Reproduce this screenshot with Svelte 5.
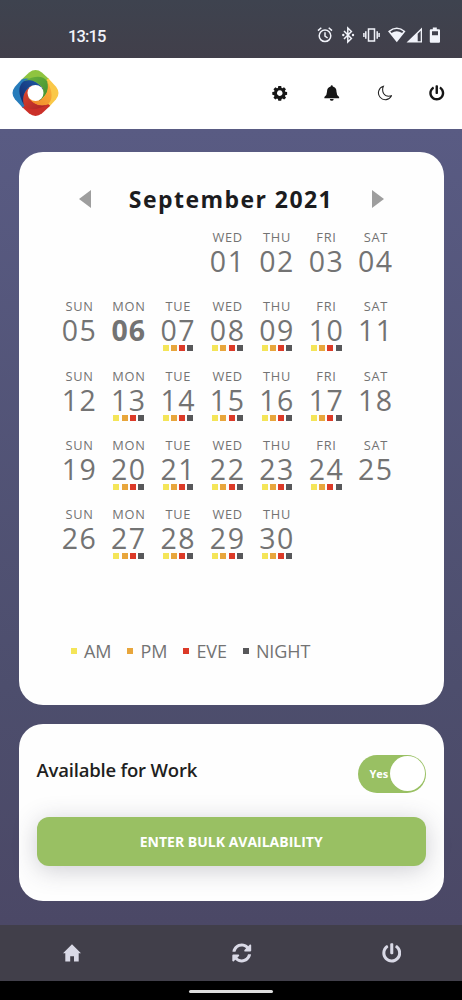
<script lang="ts">
  type Day = { date: number; name: string; shifts: boolean };

  const dayNames = ["SUN", "MON", "TUE", "WED", "THU", "FRI", "SAT"];
  const firstWeekday = 3;
  const today = 6;

  const shifts = [
    { id: "am", label: "AM" },
    { id: "pm", label: "PM" },
    { id: "eve", label: "EVE" },
    { id: "night", label: "NIGHT" },
  ];

  // blades of the logo, clockwise from the top
  const blades = [
    { id: "green", from: "#3f8f33", to: "#6db33c", outer: "#8fc43f" },
    { id: "yellow", from: "#f08329", to: "#f9b53b", outer: "#fac848" },
    { id: "red", from: "#e2482c", to: "#a82228", outer: "#cb3029" },
    { id: "blue", from: "#1d5ba6", to: "#14266b", outer: "#277cbb" },
  ];

  const days: Day[] = Array.from({ length: 30 }, (_, i) => {
    const weekday = (i + firstWeekday) % 7;
    return {
      date: i + 1,
      name: dayNames[weekday],
      shifts: i + 1 > today && weekday > 0 && weekday < 6,
    };
  });

  let available = $state(true);
</script>

{#snippet powerIcon()}
  <svg class="power" viewBox="0 0 512 512">
    <path
      d="M400 54.1c63 45 104 118.6 104 201.9 0 136.8-110.8 247.7-247.5 248C120 504.3 8.2 393 8 256.4 7.9 173.1 48.9 99.3 111.8 54.2c11.7-8.3 28-4.8 35 7.7L162.6 90c5.9 10.5 3.1 23.8-6.6 31-41.5 30.8-68 79.6-68 134.9-.1 92.3 74.5 168.1 168 168.1 91.6 0 168.6-74.2 168-169.1-.3-51.8-24.7-101.8-68.1-134-9.7-7.2-12.4-20.5-6.5-30.9l15.8-28.1c7-12.4 23.2-16.1 34.8-7.8zM296 264V24c0-13.3-10.7-24-24-24h-32c-13.3 0-24 10.7-24 24v240c0 13.3 10.7 24 24 24h32c13.3 0 24-10.7 24-24z"
    />
  </svg>
{/snippet}

<div class="screen">
  <div class="status">
    <span class="time">13:15</span>
    <svg class="status-icons" viewBox="0 0 126 18">
      <g fill="none" stroke="#f1f3fa" stroke-width="1.5">
        <circle cx="10" cy="9.8" r="5.8" />
        <path d="M10 6.2v4l2.6 1.8M3 4.6l3.3-2.8M17 4.6l-3.3-2.8" />
        <path d="M29 5l7.4 7.6-3.6 3.4V2l3.6 3.4L29 13" />
        <path d="M53.5 3h6v12h-6zM50.8 5.2v7.6M62.2 5.2v7.6M48.9 7v4M64.1 7v4" />
      </g>
      <g fill="#f1f3fa">
        <circle cx="28.3" cy="9" r="1.2" />
        <circle cx="38" cy="9" r="1.2" />
        <path
          fill-rule="evenodd"
          d="M73 5.2Q81.8-2 90.5 5.2L81.8 16.3zM75.2 5.4l1.3 1.7q5.3-3.8 10.6 0l1.3-1.7q-6.6-4.8-13.2 0z"
        />
        <path fill-rule="evenodd" d="M91.5 16.5L107 1.5v15zM102.7 7.8v7.4h3V4.8z" />
        <path
          fill-rule="evenodd"
          d="M117.8 1.5h4v1.7h2.2q1 0 1 1v11.5q0 1-1 1h-8.2q-1 0-1-1V4.2q0-1 1-1h2zM117 5.2v4h6v-4z"
        />
      </g>
    </svg>
  </div>

  <header class="header">
    <svg class="logo" viewBox="0 0 48 48">
      <defs>
        {#each blades as blade (blade.id)}
          <linearGradient id={blade.id} x1="1" y1="1" x2="0" y2="0">
            <stop offset="0" stop-color={blade.from} />
            <stop offset="1" stop-color={blade.to} />
          </linearGradient>
        {/each}
      </defs>
      {#each blades as blade, i (blade.id)}
        <path
          fill={blade.outer}
          transform="rotate({i * 90} 24 24)"
          d="M9 11L17.5 3Q24-2 30.5 3L37.5 9.5Q40 13 38 20L24 24z"
        />
      {/each}
      {#each blades as blade, i (blade.id)}
        <path
          fill="url(#{blade.id})"
          transform="rotate({i * 90} 24 24)"
          d="M12 12Q29 3 36 12Q40 23 28 32L24 24 32 20Q25 9 12 12z"
        />
      {/each}
      <circle cx="24" cy="24" r="8.2" fill="#fff" />
    </svg>
    <div class="header-icons">
      <svg viewBox="0 0 16 16">
        <path
          fill-rule="evenodd"
          d="M6.5.9h3l.4 1.9.9.4 1.6-1.2 2 2-1.1 1.6.4 1.1 1.9.3v2.8l-1.9.4-.4 1 1.2 1.7-2 1.9-1.6-1-1 .4-.4 1.9h-3l-.4-1.9-1-.4-1.6 1-2-1.9 1.1-1.7-.4-1-1.9-.4V7l1.9-.3.4-1.1L1.5 4l2-2 1.6 1.2 1-.4zM8 5.2a2.9 2.9 0 1 0 .01 0z"
        />
      </svg>
      <svg viewBox="0 0 16 16">
        <path
          d="M8 0q1.1 0 1.1 1.3 3.8 1 3.8 5.3 0 3.6 2.7 5.6v1.3H.4v-1.3q2.7-2 2.7-5.6 0-4.3 3.8-5.3Q6.9 0 8 0zM6 14.1h4Q9.8 16 8 16t-2-1.9z"
        />
      </svg>
      <svg class="moon" viewBox="0 0 16 16">
        <path d="M6.6 1A7.1 7.1 0 1 0 15 10.9Q9.4 12.5 6.8 8.5 4.9 4.8 6.6 1z" />
      </svg>
      {@render powerIcon()}
    </div>
  </header>

  <main class="content">
    <section class="card calendar">
      <div class="month">
        <svg class="arrow" viewBox="0 0 12 18"><path d="M12 0v18L0 9z" /></svg>
        <h1>September 2021</h1>
        <svg class="arrow" viewBox="0 0 12 18"><path d="M0 0v18l12-9z" /></svg>
      </div>

      <div class="days">
        {#each days as day (day.date)}
          <div class="day" class:first={day.date === 1} class:today={day.date === today}>
            <span class="day-name">{day.name}</span>
            <span class="date">{String(day.date).padStart(2, "0")}</span>
            {#if day.shifts}
              <div class="dots">
                {#each shifts as shift (shift.id)}
                  <i class="dot {shift.id}"></i>
                {/each}
              </div>
            {/if}
          </div>
        {/each}
      </div>

      <div class="legend">
        {#each shifts as shift (shift.id)}
          <span class="legend-item"><i class="dot {shift.id}"></i>{shift.label}</span>
        {/each}
      </div>
    </section>

    <section class="card availability">
      <div class="available-row">
        <h2>Available for Work</h2>
        <button
          class="toggle"
          class:off={!available}
          type="button"
          role="switch"
          aria-checked={available}
          onclick={() => (available = !available)}
        >
          <span>{available ? "Yes" : "No"}</span>
          <i class="knob"></i>
        </button>
      </div>
      <button class="bulk" type="button">ENTER BULK AVAILABILITY</button>
    </section>
  </main>

  <nav class="nav">
    <svg class="home" viewBox="0 0 18 18">
      <path d="M9 .3L18 9.2h-2.3V17.5h-4.7v-5.3H7.2v5.3H2.3V9.2H0z" />
    </svg>
    <svg class="sync" viewBox="0 0 512 512">
      <path
        d="M370.72 133.28C339.458 104.008 298.888 87.962 255.848 88c-77.458.068-144.328 53.178-162.791 126.85-1.344 5.363-6.122 9.15-11.651 9.15H24.103c-7.498 0-13.194-6.807-11.807-14.176C33.933 94.924 134.813 8 256 8c66.448 0 126.791 26.136 171.315 68.685L463.03 40.97C478.149 25.851 504 36.559 504 57.941V192c0 13.255-10.745 24-24 24H345.941c-21.382 0-32.09-25.851-16.971-40.971l41.75-41.749zM32 296h134.059c21.382 0 32.09 25.851 16.971 40.971l-41.75 41.75c31.262 29.273 71.835 45.319 114.876 45.28 77.418-.07 144.315-53.144 162.787-126.849 1.344-5.363 6.122-9.15 11.651-9.15h57.304c7.498 0 13.194 6.807 11.807 14.176C478.067 417.076 377.187 504 256 504c-66.448 0-126.791-26.136-171.315-68.685L48.97 471.03C33.851 486.149 8 475.441 8 454.059V320c0-13.255 10.745-24 24-24z"
      />
    </svg>
    {@render powerIcon()}
  </nav>
  <div class="gesture"><i></i></div>
</div>

<style>
  :global(body) {
    margin: 0;
  }

  .screen {
    width: 462px;
    height: 1000px;
    display: flex;
    flex-direction: column;
    overflow: hidden;
    font-family: "Open Sans", "Noto Sans", sans-serif;
    color: #737373;
  }

  .screen * {
    box-sizing: border-box;
  }

  svg {
    display: block;
    flex: none;
  }

  .status {
    height: 58px;
    flex: none;
    display: flex;
    justify-content: space-between;
    align-items: flex-start;
    padding: 26px 21px 0 68px;
    background: linear-gradient(#3e434f, #413f4a);
  }

  .time {
    font-family: Roboto, sans-serif;
    font-size: 16.5px;
    font-weight: 500;
    line-height: 22px;
    letter-spacing: -0.9px;
    color: #f1f3fa;
  }

  .status-icons {
    width: 126px;
    height: 18px;
  }

  .header {
    height: 70.5px;
    flex: none;
    display: flex;
    justify-content: space-between;
    align-items: center;
    padding: 0 17.5px 0 12px;
    background: #fff;
  }

  .logo {
    width: 47px;
    height: 48px;
  }

  .header-icons {
    display: flex;
    gap: 36.8px;
    fill: #161616;
  }

  .header-icons svg {
    width: 15.5px;
    height: 16px;
  }

  .header-icons .moon {
    fill: none;
    stroke: #222;
    stroke-width: 1.1;
  }

  .content {
    flex: 1;
    min-height: 0;
    padding: 23.5px 18.5px 0 19px;
    display: flex;
    flex-direction: column;
    gap: 19px;
    background: linear-gradient(#595b83, #4d4e6d 70%, #4b4866);
  }

  .card {
    border-radius: 24px;
    background: #fefefe;
  }

  .calendar {
    height: 552.5px;
    flex: none;
    padding-top: 30px;
  }

  .month {
    height: 34px;
    display: flex;
    justify-content: space-between;
    align-items: center;
    padding: 0 60px 0 59.5px;
  }

  .arrow {
    width: 12px;
    height: 18px;
    fill: #9e9e9e;
  }

  h1 {
    margin: 0;
    font-size: 23px;
    line-height: 34px;
    font-weight: 700;
    letter-spacing: 1.45px;
    color: #1c1c1e;
    white-space: nowrap;
  }

  .days {
    display: grid;
    grid-template-columns: repeat(7, 49.4px);
    grid-auto-rows: 69.3px;
    margin: 13px 0 0 35.8px;
  }

  .day {
    display: flex;
    flex-direction: column;
    align-items: center;
  }

  .first {
    grid-column-start: 4;
  }

  .day-name {
    font-size: 12.8px;
    line-height: 17px;
    letter-spacing: 0.7px;
  }

  .date {
    font-size: 28.5px;
    line-height: 30px;
    letter-spacing: 1.5px;
  }

  .today .date {
    font-weight: 700;
    letter-spacing: 1px;
  }

  .dots {
    display: flex;
    gap: 2.2px;
    padding-right: 0.3px;
  }

  .dot {
    width: 6px;
    height: 6px;
  }

  .am {
    background: #f4e558;
  }

  .pm {
    background: #e8a63c;
  }

  .eve {
    background: #dc3a28;
  }

  .night {
    background: #58585a;
  }

  .legend {
    display: flex;
    gap: 16.1px;
    margin: 64px 0 0 52px;
  }

  .legend-item {
    display: flex;
    align-items: center;
    gap: 7px;
    font-size: 18px;
    line-height: 24px;
    letter-spacing: -0.1px;
  }

  .availability {
    height: 177.5px;
    flex: none;
    padding: 31px 17.5px 0;
  }

  .available-row {
    display: flex;
    justify-content: space-between;
    align-items: flex-start;
  }

  h2 {
    margin: 0;
    font-size: 18.5px;
    line-height: 30px;
    font-weight: 600;
    letter-spacing: -0.2px;
    color: #1f1f21;
  }

  button {
    border: 0;
    font-family: inherit;
    font-weight: 700;
    color: #fff;
    background: #99c063;
    cursor: pointer;
  }

  .toggle {
    width: 68.5px;
    height: 38px;
    display: flex;
    justify-content: space-between;
    align-items: center;
    padding: 0 1.5px 0 12px;
    border-radius: 19px;
    font-size: 11px;
  }

  .toggle.off {
    flex-direction: row-reverse;
    padding: 0 12px 0 1.5px;
    background: #aaa;
  }

  .knob {
    width: 35px;
    height: 35px;
    border-radius: 50%;
    background: #fff;
  }

  .bulk {
    width: 100%;
    height: 49px;
    display: block;
    margin-top: 24px;
    border-radius: 12px;
    font-size: 14px;
    box-shadow: 0 4px 24px rgba(60, 60, 80, 0.25);
  }

  .nav {
    height: 56px;
    flex: none;
    display: flex;
    align-items: center;
    padding-left: 63px;
    background: #413f4a;
    fill: #d9d9e6;
  }

  .home {
    width: 18px;
    height: 18px;
  }

  .sync,
  .nav .power {
    width: 19.5px;
    height: 20px;
  }

  .sync {
    margin-left: 151px;
  }

  .nav .power {
    margin-left: 130px;
  }

  .gesture {
    height: 19px;
    flex: none;
    display: flex;
    justify-content: center;
    align-items: center;
    padding-top: 2px;
    background: #000;
  }

  .gesture i {
    width: 84px;
    height: 2.5px;
    border-radius: 2px;
    background: #ddd;
  }
</style>
